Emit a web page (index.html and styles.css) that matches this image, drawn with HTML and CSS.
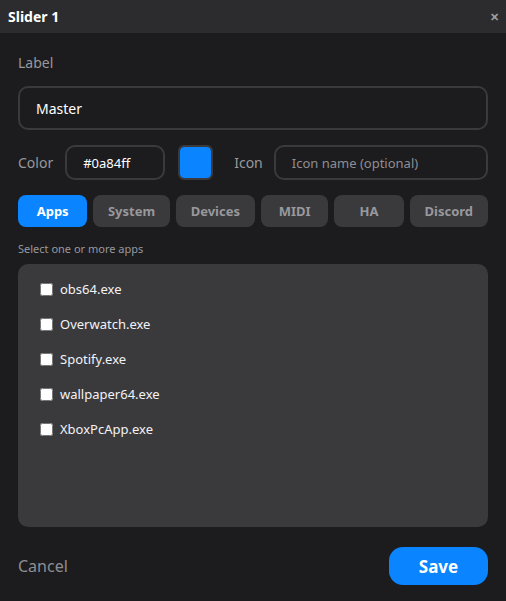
FILE: index.html
```html
<!DOCTYPE html>
<html lang="en">
<head>
  <meta charset="UTF-8">
  <title>Slider 1</title>
  <link rel="stylesheet" href="styles.css">
</head>
<body>
  <div class="dialog">
    <div class="titlebar">
      <span class="title">Slider 1</span>
      <span class="close">&#x2715;</span>
    </div>

    <div class="content">
      <label class="field-label" for="label">Label</label>
      <input id="label" class="text-input big" type="text" value="Master" />

      <div class="color-row">
        <span class="inline-label">Color</span>
        <input class="text-input hex" type="text" value="#0a84ff" />
        <span class="swatch"></span>
        <span class="inline-label icon-label">Icon</span>
        <input class="text-input icon-input" type="text" placeholder="Icon name (optional)" />
      </div>

      <div class="tabs">
        <button class="tab active">Apps</button>
        <button class="tab">System</button>
        <button class="tab">Devices</button>
        <button class="tab">MIDI</button>
        <button class="tab">HA</button>
        <button class="tab">Discord</button>
      </div>

      <p class="hint">Select one or more apps</p>

      <div class="app-list">
        <label class="app"><input type="checkbox" /> obs64.exe</label>
        <label class="app"><input type="checkbox" /> Overwatch.exe</label>
        <label class="app"><input type="checkbox" /> Spotify.exe</label>
        <label class="app"><input type="checkbox" /> wallpaper64.exe</label>
        <label class="app"><input type="checkbox" /> XboxPcApp.exe</label>
      </div>

      <div class="footer">
        <button class="cancel">Cancel</button>
        <button class="save">Save</button>
      </div>
    </div>
  </div>
</body>
</html>
```

FILE: styles.css
```css
body {
  margin: 0;
  background: #1c1c1e;
  font-family: "Noto Sans", "Open Sans", sans-serif;
  color: #fff;
}

.dialog {
  width: 506px;
  height: 601px;
  display: flex;
  flex-direction: column;
}

.titlebar {
  height: 33px;
  background: #2c2c2e;
  display: flex;
  align-items: center;
  justify-content: space-between;
  padding: 0 8px;
}

.title {
  font-weight: bold;
  font-size: 14px;
}

.close {
  font-size: 11px;
  font-weight: bold;
  color: #a0a0a4;
  margin-right: -1px;
}

.content {
  flex: 1;
  padding: 20px 18px 0 18px;
  display: flex;
  flex-direction: column;
}

.field-label {
  color: #98989d;
  font-size: 14px;
  line-height: 20px;
  margin-bottom: 13px;
}

.text-input {
  background: #1c1c1e;
  border: 2px solid #3a3a3c;
  border-radius: 10px;
  color: #fff;
  font-family: inherit;
  font-size: 13px;
  box-sizing: border-box;
  outline: none;
}

.text-input::placeholder {
  color: #8e8e93;
}

.big {
  width: 100%;
  height: 44px;
  padding: 0 16px;
  font-size: 14px;
}

.color-row {
  display: flex;
  align-items: center;
  margin-top: 15px;
  height: 35px;
}

.inline-label {
  color: #98989d;
  font-size: 14px;
  margin-right: 12px;
}

.hex {
  flex-shrink: 0;
  width: 100px;
  height: 35px;
  padding: 0 16px;
}

.swatch {
  flex-shrink: 0;
  width: 35px;
  height: 35px;
  box-sizing: border-box;
  border: 2px solid #3a3a3c;
  border-radius: 6px;
  background: #0a84ff;
  background-clip: padding-box;
  margin-left: 13px;
}

.icon-label {
  margin-left: 21px;
  margin-right: 11px;
}

.icon-input {
  flex: 1;
  min-width: 0;
  height: 35px;
  padding: 0 16px;
}

.tabs {
  display: grid;
  grid-template-columns: 69fr 76fr 79fr 67fr 69fr 78fr;
  gap: 6px;
  margin-top: 15px;
}

.tab {
  height: 32px;
  border: none;
  border-radius: 8px;
  background: #3a3a3c;
  color: #98989d;
  font-family: inherit;
  font-weight: bold;
  font-size: 13px;
  padding: 0;
}

.tab.active {
  background: #0a84ff;
  color: #fff;
}

.hint {
  color: #98989d;
  font-size: 11px;
  margin: 14px 0 0 0;
  line-height: 16px;
}

.app-list {
  margin-top: 7px;
  height: 263px;
  background: #3a3a3c;
  border-radius: 10px;
  padding: 15px 0 0 21px;
  box-sizing: border-box;
  display: flex;
  flex-direction: column;
  gap: 15px;
}

.app {
  display: flex;
  align-items: center;
  font-size: 13px;
  line-height: 20px;
  color: #f2f2f7;
}

.app input {
  width: 13px;
  height: 13px;
  margin: 0 7px 0 1px;
}

.footer {
  display: flex;
  justify-content: space-between;
  align-items: center;
  margin-top: 20px;
}

.cancel {
  background: none;
  border: none;
  padding: 0;
  color: #8e8e93;
  font-family: inherit;
  font-size: 16px;
}

.save {
  width: 99px;
  height: 38px;
  border: none;
  border-radius: 14px;
  background: #0a84ff;
  color: #fff;
  font-family: inherit;
  font-weight: bold;
  font-size: 17px;
}
```
